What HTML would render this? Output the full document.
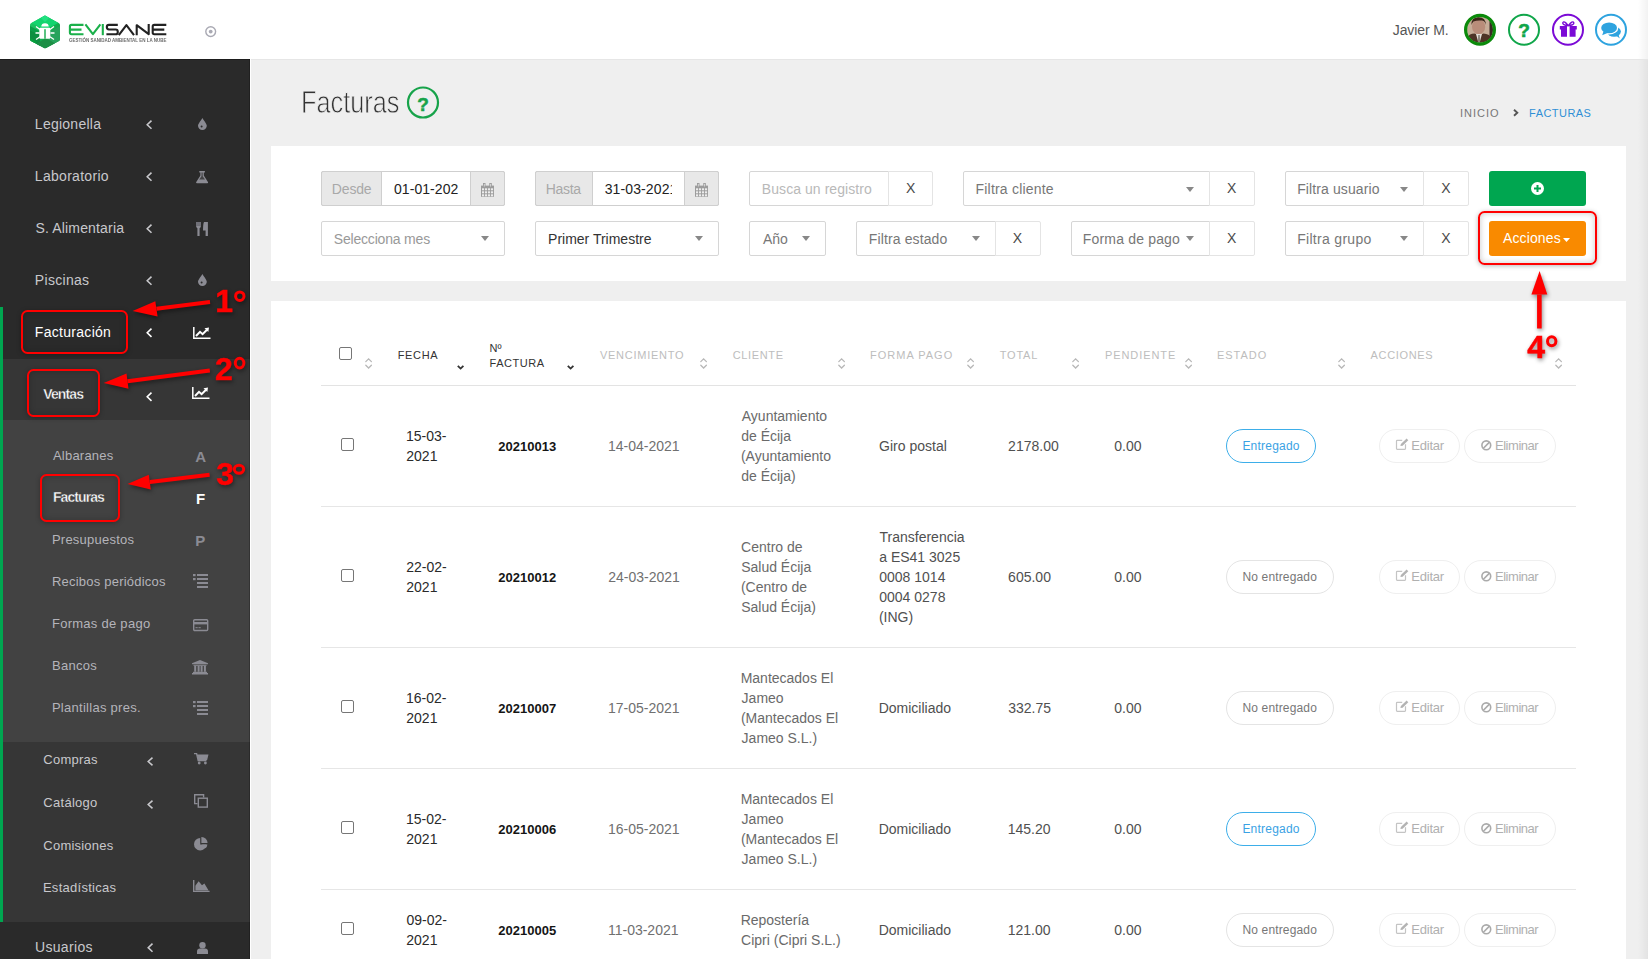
<!DOCTYPE html><html><head><meta charset="utf-8"><title>Facturas</title><style>
*{margin:0;padding:0;box-sizing:border-box}
html,body{width:1648px;height:959px;overflow:hidden;background:#efefef;font-family:"Liberation Sans",sans-serif;position:relative}
.abs{position:absolute}
.t{position:absolute;white-space:nowrap;line-height:1}
svg{position:absolute;overflow:visible}
</style></head><body>
<div class="abs" style="left:0px;top:0px;width:1648px;height:59px;background:#fff"></div>
<div class="abs" style="left:1638px;top:0px;width:10px;height:959px;background:linear-gradient(90deg,rgba(0,0,0,0),rgba(0,0,0,0.05))"></div>
<svg style="left:0;top:0" width="250" height="59" viewBox="0 0 250 59">
<defs><linearGradient id="hg" x1="0" y1="0" x2="1" y2="1"><stop offset="0" stop-color="#1fd06a"/><stop offset="0.5" stop-color="#10b150"/><stop offset="1" stop-color="#1a9a48"/></linearGradient></defs>
<path d="M45,15.5 L59,23.2 Q60,23.8 60,25 L60,39.3 Q60,40.5 59,41.1 L46,48 Q45,48.5 44,48 L31,41.1 Q30,40.5 30,39.3 L30,25 Q30,23.8 31,23.2 L44,15.9 Q45,15.3 46,15.9Z" fill="url(#hg)"/>
<clipPath id="hc"><path d="M45,15.5 L59,23.2 Q60,23.8 60,25 L60,39.3 Q60,40.5 59,41.1 L46,48 Q45,48.5 44,48 L31,41.1 Q30,40.5 30,39.3 L30,25 Q30,23.8 31,23.2 L44,15.9 Q45,15.3 46,15.9Z"/></clipPath>
<g clip-path="url(#hc)">
<path d="M30,15 H60 V22 L45,30 L30,22Z" fill="#12d46e"/>
<path d="M38,15 H52 L45,22Z" fill="#22e080"/>
<path d="M30,26 L45,34 L45,38 L30,30Z" fill="#0a9c48"/>
<path d="M30,30 L40,35 L40,48 L30,48Z" fill="#0b8f40"/>
<path d="M45,34 L60,26 V48 H45Z" fill="#27a35c"/>
<path d="M36,44 L46,38 L56,44 L45,49Z" fill="#1c8f45"/>
<path d="M30,38 L37,42 L30,46Z" fill="#07a13e"/>
</g>
<path d="M41.3,26.6 A3.7,3.4 0 0 1 48.7,26.6 Z" fill="#fff"/>
<rect x="39.3" y="27.8" width="11" height="11" rx="1" fill="#fff"/>
<rect x="44.3" y="29.2" width="1.4" height="9.6" fill="#14a84c"/>
<path d="M36,26.5 L40,29.5 M54,26.5 L50,29.5 M35.5,33 L39.5,33 M54.5,33 L50.5,33 M36,39.5 L40,36.8 M54,39.5 L50,36.8" stroke="#fff" stroke-width="1.3"/>
<g fill="none" stroke-width="2.1" stroke-linecap="butt" stroke-linejoin="round">
<path d="M83.5,24.9 H71.5 Q69.9,24.9 69.9,26.5 V32.6 Q69.9,34.3 71.5,34.3 H83.5 M70,29.6 H81.5" stroke="#1ab04a"/>
<path d="M85.4,24.4 L92.9,34.2 L100.4,24.4" stroke="#1ab04a"/>
<path d="M102.8,24 V35.2" stroke="#1ab04a"/>
<path d="M117.8,24.9 H109 Q106.8,24.9 106.8,27.1 Q106.8,29.5 109,29.5 H115.6 Q117.8,29.5 117.8,31.9 Q117.8,34.3 115.6,34.3 H106.4" stroke="#222"/>
<path d="M118.8,35.2 L126.4,25.1 L134,35.2" stroke="#222"/>
<path d="M136.7,35.2 V25.2 L148.7,34.2 V24" stroke="#222"/>
<path d="M166.3,24.9 H154.3 Q152.7,24.9 152.7,26.5 V32.6 Q152.7,34.3 154.3,34.3 H166.3 M152.8,29.6 H164.3" stroke="#222"/>
</g>
<text x="69" y="41.9" font-family="Liberation Sans" font-weight="bold" font-size="4.5" fill="#505050" opacity="0.85" textLength="97.5" lengthAdjust="spacingAndGlyphs">GESTIÓN SANIDAD AMBIENTAL EN LA NUBE</text>
<circle cx="210.7" cy="31.6" r="4.9" fill="none" stroke="#a9a9b3" stroke-width="1.4"/>
<circle cx="210.7" cy="31.6" r="1.9" fill="#a9a9b3"/>
</svg>
<div class="t" style="left:1392.80px;top:23px;font-size:14px;color:#555;letter-spacing:-0.116px;">Javier M.</div>
<svg style="left:1460px;top:10px" width="170" height="42" viewBox="1460 10 170 42">
<defs><clipPath id="av"><circle cx="1480" cy="29.8" r="13"/></clipPath></defs>
<g clip-path="url(#av)">
<rect x="1466" y="15" width="28" height="30" fill="#c7ad98"/>
<rect x="1489.5" y="15" width="5" height="30" fill="#3a2a24"/>
<ellipse cx="1478.6" cy="26.8" rx="6.6" ry="7.4" fill="#b98d7a"/>
<path d="M1471.5,25 Q1471,17 1478.5,17.2 Q1486,17.5 1485.8,25 Q1485,21 1482,20.6 Q1477,20 1473.5,21.5 Q1472,23 1471.5,25Z" fill="#3b2418"/>
<path d="M1466,45 L1466.5,38 Q1469,34 1474.5,33.6 L1479,35.5 L1483.5,33.6 Q1489,34 1492,38 L1494,45Z" fill="#4e3426"/>
<path d="M1476,34 L1479,45 L1482,34Z" fill="#e2ddd6"/>
<path d="M1478.2,35 L1477.8,45 L1480.2,45 L1479.8,35Z" fill="#8a8278"/>
</g>
<circle cx="1480" cy="29.8" r="14.4" fill="none" stroke="#0b8a0b" stroke-width="3.2"/>
<circle cx="1524" cy="29.8" r="15" fill="none" stroke="#10a64a" stroke-width="2"/>
<circle cx="1568" cy="29.8" r="15" fill="none" stroke="#7b0ad6" stroke-width="2"/>
<circle cx="1611" cy="29.8" r="15" fill="none" stroke="#2ea3df" stroke-width="2"/>
<path d="M1559.8,26 H1576.8 V29.6 H1559.8Z M1561,29.6 H1575.6 V36.8 H1561Z" fill="#7b0ad6"/>
<rect x="1567" y="25.6" width="2.6" height="11.4" fill="#fff"/>
<path d="M1568.3,25.8 Q1564,20 1562.8,22.8 Q1562.2,25 1568.3,25.8 M1568.3,25.8 Q1572.6,20 1573.8,22.8 Q1574.4,25 1568.3,25.8" fill="none" stroke="#7b0ad6" stroke-width="1.4"/>
<ellipse cx="1614" cy="31.6" rx="6.9" ry="5.2" fill="#2ea3df"/>
<path d="M1616,35.5 L1619.8,38.4 L1618.2,34.2Z" fill="#2ea3df"/>
<ellipse cx="1609.1" cy="27.9" rx="9.2" ry="6.6" fill="#fff"/>
<path d="M1602.5,31 L1601.4,35.6 L1608,32.5Z" fill="#fff" stroke="#fff" stroke-width="1.6"/>
<ellipse cx="1609.1" cy="27.9" rx="7.9" ry="5.4" fill="#2ea3df"/>
<path d="M1603.5,31.2 L1602.2,35.2 L1607.5,32.9Z" fill="#2ea3df"/>
</svg>
<div class="t" style="left:1518.16px;top:20.799999999999997px;font-size:19px;color:#10a64a;font-weight:bold;-webkit-text-stroke:0.6px #10a64a;">?</div>
<div class="abs" style="left:0px;top:59px;width:250px;height:900px;background:#2a2a2a"></div>
<div class="abs" style="left:0px;top:359px;width:250px;height:61px;background:#363636"></div>
<div class="abs" style="left:0px;top:420px;width:250px;height:322px;background:#424242"></div>
<div class="abs" style="left:0px;top:742px;width:250px;height:180px;background:#363636"></div>
<div class="abs" style="left:0px;top:922px;width:250px;height:37px;background:#2a2a2a"></div>
<div class="abs" style="left:0px;top:307px;width:3px;height:615px;background:#00a650"></div>
<div class="abs" style="left:249px;top:59px;width:1px;height:900px;background:rgba(0,0,0,0.22)"></div>
<div class="abs" style="left:250px;top:59px;width:1px;height:900px;background:#fff"></div>
<div class="abs" style="left:0px;top:59px;width:250px;height:1px;background:rgba(0,0,0,0.3)"></div>
<div class="abs" style="left:251px;top:59px;width:1397px;height:1px;background:#e6e6e6"></div>
<div class="t" style="left:34.85px;top:117px;font-size:14px;color:#c8c8cc;letter-spacing:0.253px;">Legionella</div>
<div class="t" style="left:34.85px;top:169px;font-size:14px;color:#c8c8cc;letter-spacing:0.290px;">Laboratorio</div>
<div class="t" style="left:35.38px;top:221px;font-size:14px;color:#c8c8cc;letter-spacing:0.170px;">S. Alimentaria</div>
<div class="t" style="left:34.85px;top:273px;font-size:14px;color:#c8c8cc;letter-spacing:0.302px;">Piscinas</div>
<div class="t" style="left:34.85px;top:325px;font-size:14px;color:#fff;letter-spacing:0.291px;">Facturación</div>
<div class="t" style="left:43.22px;top:387px;font-size:14px;color:#fff;font-weight:bold;letter-spacing:-0.858px;-webkit-text-stroke:0.35px #363636;">Ventas</div>
<div class="t" style="left:52.97px;top:449px;font-size:13px;color:#b4b4ba;letter-spacing:0.221px;">Albaranes</div>
<div class="t" style="left:51.93px;top:533px;font-size:13px;color:#b4b4ba;letter-spacing:0.241px;">Presupuestos</div>
<div class="t" style="left:51.93px;top:575px;font-size:13px;color:#b4b4ba;letter-spacing:0.218px;">Recibos periódicos</div>
<div class="t" style="left:51.93px;top:617px;font-size:13px;color:#b4b4ba;letter-spacing:0.271px;">Formas de pago</div>
<div class="t" style="left:51.93px;top:659px;font-size:13px;color:#b4b4ba;letter-spacing:0.313px;">Bancos</div>
<div class="t" style="left:51.93px;top:701px;font-size:13px;color:#b4b4ba;letter-spacing:0.272px;">Plantillas pres.</div>
<div class="t" style="left:52.88px;top:490px;font-size:14px;color:#fff;font-weight:bold;letter-spacing:-0.910px;-webkit-text-stroke:0.35px #424242;">Facturas</div>
<div class="t" style="left:43.35px;top:753px;font-size:13px;color:#c8c8cc;letter-spacing:0.232px;">Compras</div>
<div class="t" style="left:43.35px;top:796px;font-size:13px;color:#c8c8cc;letter-spacing:0.278px;">Catálogo</div>
<div class="t" style="left:43.35px;top:839px;font-size:13px;color:#c8c8cc;letter-spacing:0.212px;">Comisiones</div>
<div class="t" style="left:42.93px;top:881px;font-size:13px;color:#c8c8cc;letter-spacing:0.267px;">Estadísticas</div>
<div class="t" style="left:34.94px;top:940px;font-size:14px;color:#c8c8cc;letter-spacing:0.332px;">Usuarios</div>
<svg style="left:146px;top:119.89999999999999px" width="7.5" height="10.399999999999991" viewBox="0 0 7.5 10.399999999999991"><path d="M5.5,0.6 L1.2,4.699999999999996 L5.5,8.799999999999992" fill="none" stroke="#c8c8cc" stroke-width="1.55"/></svg>
<svg style="left:146px;top:171.60000000000002px" width="7.5" height="10.399999999999977" viewBox="0 0 7.5 10.399999999999977"><path d="M5.5,0.6 L1.2,4.699999999999989 L5.5,8.799999999999978" fill="none" stroke="#c8c8cc" stroke-width="1.55"/></svg>
<svg style="left:146px;top:223.9px" width="7.5" height="10.399999999999977" viewBox="0 0 7.5 10.399999999999977"><path d="M5.5,0.6 L1.2,4.699999999999989 L5.5,8.799999999999978" fill="none" stroke="#c8c8cc" stroke-width="1.55"/></svg>
<svg style="left:146px;top:275.6px" width="7.5" height="10.399999999999977" viewBox="0 0 7.5 10.399999999999977"><path d="M5.5,0.6 L1.2,4.699999999999989 L5.5,8.799999999999978" fill="none" stroke="#c8c8cc" stroke-width="1.55"/></svg>
<svg style="left:146px;top:328px" width="7.5" height="10.5" viewBox="0 0 7.5 10.5"><path d="M5.5,0.6 L1.2,4.75 L5.5,8.9" fill="none" stroke="#fff" stroke-width="1.55"/></svg>
<svg style="left:146px;top:391.5px" width="7.5" height="10.5" viewBox="0 0 7.5 10.5"><path d="M5.5,0.6 L1.2,4.75 L5.5,8.9" fill="none" stroke="#fff" stroke-width="1.55"/></svg>
<svg style="left:147px;top:757px" width="7.5" height="10" viewBox="0 0 7.5 10"><path d="M5.5,0.6 L1.2,4.5 L5.5,8.4" fill="none" stroke="#c8c8cc" stroke-width="1.55"/></svg>
<svg style="left:147px;top:800px" width="7.5" height="10" viewBox="0 0 7.5 10"><path d="M5.5,0.6 L1.2,4.5 L5.5,8.4" fill="none" stroke="#c8c8cc" stroke-width="1.55"/></svg>
<svg style="left:146.5px;top:943px" width="7.5" height="10.299999999999955" viewBox="0 0 7.5 10.299999999999955"><path d="M5.5,0.6 L1.2,4.649999999999977 L5.5,8.699999999999955" fill="none" stroke="#c8c8cc" stroke-width="1.55"/></svg>
<svg style="left:197.5px;top:118.3px" width="9" height="12" viewBox="0 0 9 12"><path d="M4.4,0 C3.5,2 0,5.6 0,7.8 A4.4,4.2 0 0 0 8.8,7.8 C8.8,5.6 5.3,2 4.4,0Z" fill="#8b8b93"/><circle cx="3.6" cy="8.4" r="1" fill="#2b2b2b"/></svg>
<svg style="left:197.5px;top:274.3px" width="9" height="12" viewBox="0 0 9 12"><path d="M4.4,0 C3.5,2 0,5.6 0,7.8 A4.4,4.2 0 0 0 8.8,7.8 C8.8,5.6 5.3,2 4.4,0Z" fill="#8b8b93"/><circle cx="3.6" cy="8.4" r="1" fill="#2b2b2b"/></svg>
<svg style="left:195.8px;top:170.8px" width="12.2" height="12.3" viewBox="0 0 12.2 12.3"><path d="M3.3,0 H8.9 V1.4 H7.8 V4.6 L12.1,11.2 Q12.3,12.3 11.2,12.3 H1 Q-0.1,12.3 0.1,11.2 L4.4,4.6 V1.4 H3.3Z" fill="#8b8b93"/><path d="M5.5,1.6 V5.2 L3.2,8.6 H9 L6.7,5.2 V1.6Z" fill="#2b2b2b" opacity="0.75"/></svg>
<svg style="left:195.8px;top:222px" width="12" height="14" viewBox="0 0 12 14"><rect x="0" y="0" width="5" height="3.6" fill="#707078"/><path d="M0,3.4 H5 Q5,5.6 3.6,6.2 V14 H1.4 V6.2 Q0,5.6 0,3.4Z" fill="#8b8b93"/><path d="M8,0 H11.9 V14 H9.6 V8.4 H7 Q7,2 8,0Z" fill="#8b8b93"/></svg>
<svg style="left:193px;top:327.2px" width="18" height="12" viewBox="0 0 18 12"><path d="M0.8,0 V11.2 H17.5" fill="none" stroke="#fff" stroke-width="1.5"/><path d="M3,9 L7,4.8 L9.6,7.2 L14,2.8" fill="none" stroke="#fff" stroke-width="2"/><path d="M11.5,1.2 L16,0.5 L15.3,5Z" fill="#fff"/></svg>
<svg style="left:192.4px;top:387.2px" width="18" height="12" viewBox="0 0 18 12"><path d="M0.8,0 V11.2 H17.5" fill="none" stroke="#fff" stroke-width="1.5"/><path d="M3,9 L7,4.8 L9.6,7.2 L14,2.8" fill="none" stroke="#fff" stroke-width="2"/><path d="M11.5,1.2 L16,0.5 L15.3,5Z" fill="#fff"/></svg>
<div class="t" style="left:195.24px;top:449px;font-size:15px;color:#8b8b93;font-weight:bold;">A</div>
<div class="t" style="left:196.01px;top:491px;font-size:15px;color:#fff;font-weight:bold;">F</div>
<div class="t" style="left:195.31px;top:533px;font-size:15px;color:#8b8b93;font-weight:bold;">P</div>
<svg style="left:193.2px;top:574.2px" width="15" height="14" viewBox="0 0 15 14"><rect x="4" y="0" width="11" height="2" fill="#8b8b93"/><rect x="4" y="4" width="11" height="2" fill="#8b8b93"/><rect x="4" y="8" width="11" height="2" fill="#8b8b93"/><rect x="4" y="12" width="11" height="2" fill="#8b8b93"/><rect x="0" y="0" width="2.6" height="2.2" fill="#8b8b93"/><rect x="0" y="4" width="2.6" height="2.2" fill="#8b8b93"/></svg>
<svg style="left:193px;top:700.8px" width="15" height="14" viewBox="0 0 15 14"><rect x="4" y="0" width="11" height="2" fill="#8b8b93"/><rect x="4" y="4" width="11" height="2" fill="#8b8b93"/><rect x="4" y="8" width="11" height="2" fill="#8b8b93"/><rect x="4" y="12" width="11" height="2" fill="#8b8b93"/><rect x="0" y="0" width="2.6" height="2.2" fill="#8b8b93"/><rect x="0" y="4" width="2.6" height="2.2" fill="#8b8b93"/></svg>
<svg style="left:192.8px;top:618.9px" width="15.4" height="12.2" viewBox="0 0 15.4 12.2"><rect x="0.7" y="0.7" width="14" height="10.8" rx="1" fill="none" stroke="#8b8b93" stroke-width="1.4"/><rect x="0.7" y="3" width="14" height="2.4" fill="#8b8b93"/><rect x="2.5" y="8.2" width="2.2" height="1" fill="#8b8b93"/><rect x="5.5" y="8.2" width="2.2" height="1" fill="#8b8b93"/></svg>
<svg style="left:191.9px;top:659.5px" width="16" height="14.5" viewBox="0 0 16 14.5"><path d="M8,0 L16,3.2 V4.3 H0 V3.2Z" fill="#8b8b93"/><rect x="1.5" y="4.8" width="13" height="1" fill="#8b8b93"/><rect x="2.2" y="5.8" width="2" height="6" fill="#8b8b93"/><rect x="5.6" y="5.8" width="2" height="6" fill="#8b8b93"/><rect x="8.6" y="5.8" width="2" height="6" fill="#8b8b93"/><rect x="11.9" y="5.8" width="2" height="6" fill="#8b8b93"/><rect x="1" y="11.8" width="14" height="1.2" fill="#8b8b93"/><rect x="0" y="13" width="16" height="1.5" fill="#8b8b93"/></svg>
<svg style="left:194.4px;top:753px" width="13.6" height="11.5" viewBox="0 0 13.6 11.5"><path d="M0,0.6 H2.6 L4.2,7.6 H12.5 M3.2,2.3 H13.6 L12.6,6.3 H4" fill="none" stroke="#8b8b93" stroke-width="1.4"/><path d="M3.4,2.3 H13.6 L12.6,6.3 H4.2Z" fill="#8b8b93"/><circle cx="5.2" cy="10" r="1.4" fill="#8b8b93"/><circle cx="11.4" cy="10" r="1.4" fill="#8b8b93"/></svg>
<svg style="left:194px;top:794.3px" width="14" height="13.8" viewBox="0 0 14 13.8"><path d="M3.5,9.6 H0.7 V0.7 H9.6 V3.5" fill="none" stroke="#8b8b93" stroke-width="1.4"/><rect x="4.3" y="4.2" width="9" height="8.9" fill="none" stroke="#8b8b93" stroke-width="1.4"/></svg>
<svg style="left:194px;top:837px" width="13.8" height="13.2" viewBox="0 0 13.8 13.2"><path d="M6.2,1 A6.2,6.2 0 1 0 12.4,7.4 H6.2Z" fill="#8b8b93"/><path d="M7.4,0 A6,6 0 0 1 13.6,6 H7.4Z" fill="#8b8b93"/><path d="M8,7.4 H13.4 A6,6 0 0 1 11.5,11.3Z" fill="#8b8b93"/></svg>
<svg style="left:192.6px;top:879.7px" width="16.6" height="12.2" viewBox="0 0 16.6 12.2"><path d="M0.7,0 V11.4 H16.6" fill="none" stroke="#8b8b93" stroke-width="1.4"/><path d="M2.4,10.4 V5.8 L5.6,1.2 L9,5.2 L11.4,3.4 L15.6,10.4Z" fill="#8b8b93"/></svg>
<svg style="left:196.7px;top:942px" width="11" height="12" viewBox="0 0 11 12"><circle cx="5.5" cy="3.2" r="3.2" fill="#8b8b93"/><path d="M0,12 V9.6 Q0,6.4 3,6.4 H8 Q11,6.4 11,9.6 V12Z" fill="#8b8b93"/></svg>
<div class="t" style="left:300.72px;top:87px;font-size:31px;color:#333;transform:scaleX(0.8167);transform-origin:0 0;-webkit-text-stroke:0.8px #efefef;">Facturas</div>
<svg style="left:405px;top:85px" width="36" height="36" viewBox="0 0 36 36"><circle cx="18" cy="17.5" r="15" fill="none" stroke="#17a34a" stroke-width="2.2"/></svg>
<div class="t" style="left:417.16px;top:95px;font-size:19px;color:#17a34a;font-weight:bold;-webkit-text-stroke:0.5px #17a34a;">?</div>
<div class="t" style="left:1459.99px;top:108px;font-size:11px;color:#777;letter-spacing:0.985px;">INICIO</div>
<svg style="left:1512.8px;top:108.5px" width="6" height="8" viewBox="0 0 6 8"><path d="M1,0.8 L4.3,3.8 L1,6.8" fill="none" stroke="#555" stroke-width="1.9"/></svg>
<div class="t" style="left:1529.10px;top:108px;font-size:11px;color:#2f8fd6;letter-spacing:0.448px;">FACTURAS</div>
<div class="abs" style="left:271px;top:146px;width:1355px;height:135px;background:#fff"></div>
<div class="abs" style="left:271px;top:301px;width:1355px;height:658px;background:#fff"></div>
<div class="abs" style="left:321px;top:171px;width:184px;height:35px;background:#fff;border:1px solid #cfcfcf;border-radius:2px"></div>
<div class="abs" style="left:321px;top:171px;width:61px;height:35px;background:#e8e8e8;border:1px solid #cfcfcf;border-radius:2px 0 0 2px"></div>
<div class="abs" style="left:470px;top:171px;width:35px;height:35px;background:#e8e8e8;border:1px solid #cfcfcf;border-radius:0 2px 2px 0"></div>
<div class="t" style="left:331.85px;top:182px;font-size:14px;color:#a9a9a9;letter-spacing:-0.174px;">Desde</div>
<div class="t" style="left:393.97px;top:182px;font-size:14px;color:#222;letter-spacing:0.065px;">01-01-202</div>
<svg style="left:481px;top:183px" width="13" height="14" viewBox="0 0 13 14"><rect x="0" y="2.6" width="13" height="11.2" fill="#9c9c9c"/><rect x="2" y="0" width="2.5" height="4" fill="#9c9c9c"/><rect x="8.3" y="0" width="2.5" height="4" fill="#9c9c9c"/><rect x="2.9" y="0.9" width="0.8" height="2.6" fill="#e0e0e0"/><rect x="9.2" y="0.9" width="0.8" height="2.6" fill="#e0e0e0"/><rect x="1" y="5.3" width="2.1" height="2" fill="#ededed"/><rect x="1" y="8.3" width="2.1" height="2" fill="#ededed"/><rect x="1" y="11.3" width="2.1" height="2" fill="#ededed"/><rect x="4" y="5.3" width="2.1" height="2" fill="#ededed"/><rect x="4" y="8.3" width="2.1" height="2" fill="#ededed"/><rect x="4" y="11.3" width="2.1" height="2" fill="#ededed"/><rect x="7" y="5.3" width="2.1" height="2" fill="#ededed"/><rect x="7" y="8.3" width="2.1" height="2" fill="#ededed"/><rect x="7" y="11.3" width="2.1" height="2" fill="#ededed"/><rect x="10" y="5.3" width="2.1" height="2" fill="#ededed"/><rect x="10" y="8.3" width="2.1" height="2" fill="#ededed"/><rect x="10" y="11.3" width="2.1" height="2" fill="#ededed"/></svg>
<div class="abs" style="left:535px;top:171px;width:184px;height:35px;background:#fff;border:1px solid #cfcfcf;border-radius:2px"></div>
<div class="abs" style="left:535px;top:171px;width:58px;height:35px;background:#e8e8e8;border:1px solid #cfcfcf;border-radius:2px 0 0 2px"></div>
<div class="abs" style="left:684px;top:171px;width:35px;height:35px;background:#e8e8e8;border:1px solid #cfcfcf;border-radius:0 2px 2px 0"></div>
<div class="t" style="left:545.85px;top:182px;font-size:14px;color:#a9a9a9;letter-spacing:-0.362px;">Hasta</div>
<div class="abs" style="left:600px;top:175px;width:72px;height:26px;overflow:hidden"><div class="t" style="left:4.67px;top:7px;font-size:14px;color:#222;letter-spacing:0.120px;">31-03-2021</div></div>
<svg style="left:695px;top:183px" width="13" height="14" viewBox="0 0 13 14"><rect x="0" y="2.6" width="13" height="11.2" fill="#9c9c9c"/><rect x="2" y="0" width="2.5" height="4" fill="#9c9c9c"/><rect x="8.3" y="0" width="2.5" height="4" fill="#9c9c9c"/><rect x="2.9" y="0.9" width="0.8" height="2.6" fill="#e0e0e0"/><rect x="9.2" y="0.9" width="0.8" height="2.6" fill="#e0e0e0"/><rect x="1" y="5.3" width="2.1" height="2" fill="#ededed"/><rect x="1" y="8.3" width="2.1" height="2" fill="#ededed"/><rect x="1" y="11.3" width="2.1" height="2" fill="#ededed"/><rect x="4" y="5.3" width="2.1" height="2" fill="#ededed"/><rect x="4" y="8.3" width="2.1" height="2" fill="#ededed"/><rect x="4" y="11.3" width="2.1" height="2" fill="#ededed"/><rect x="7" y="5.3" width="2.1" height="2" fill="#ededed"/><rect x="7" y="8.3" width="2.1" height="2" fill="#ededed"/><rect x="7" y="11.3" width="2.1" height="2" fill="#ededed"/><rect x="10" y="5.3" width="2.1" height="2" fill="#ededed"/><rect x="10" y="8.3" width="2.1" height="2" fill="#ededed"/><rect x="10" y="11.3" width="2.1" height="2" fill="#ededed"/></svg>
<div class="abs" style="left:749px;top:171px;width:140px;height:35px;background:#fff;border:1px solid #d6d6d6;border-radius:2px 0 0 2px"></div>
<div class="abs" style="left:888px;top:171px;width:45px;height:35px;background:#fff;border:1px solid #e4e4e4;border-radius:0 2px 2px 0"></div>
<div class="t" style="left:761.85px;top:182px;font-size:14px;color:#b9b9b9;letter-spacing:0.060px;">Busca un registro</div>
<div class="t" style="left:906.09px;top:181px;font-size:14px;color:#4a4a4a;">X</div>
<div class="abs" style="left:963px;top:171px;width:247px;height:35px;background:#fff;border:1px solid #d6d6d6;border-radius:2px 0 0 2px"></div>
<div class="abs" style="left:1209px;top:171px;width:46px;height:35px;background:#fff;border:1px solid #e4e4e4;border-radius:0 2px 2px 0"></div>
<div class="t" style="left:975.55px;top:182px;font-size:14px;color:#777;letter-spacing:0.200px;">Filtra cliente</div>
<svg style="left:1186px;top:186.5px" width="8" height="5" viewBox="0 0 8 5"><path d="M0,0 H8 L4,5Z" fill="#888"/></svg>
<div class="t" style="left:1227.09px;top:181px;font-size:14px;color:#4a4a4a;">X</div>
<div class="abs" style="left:1285px;top:171px;width:139px;height:35px;background:#fff;border:1px solid #d6d6d6;border-radius:2px 0 0 2px"></div>
<div class="abs" style="left:1423px;top:171px;width:46px;height:35px;background:#fff;border:1px solid #e4e4e4;border-radius:0 2px 2px 0"></div>
<div class="t" style="left:1297.15px;top:182px;font-size:14px;color:#777;letter-spacing:0.114px;">Filtra usuario</div>
<svg style="left:1400px;top:186.5px" width="8" height="5" viewBox="0 0 8 5"><path d="M0,0 H8 L4,5Z" fill="#888"/></svg>
<div class="t" style="left:1441.29px;top:181px;font-size:14px;color:#4a4a4a;">X</div>
<div class="abs" style="left:1489px;top:171px;width:97px;height:35px;background:#00a650;border-radius:3px"></div>
<svg style="left:1530.5px;top:181.8px" width="13" height="13" viewBox="0 0 13 13"><circle cx="6.5" cy="6.5" r="6.5" fill="#fff"/><rect x="3" y="5.5" width="7" height="2" fill="#00a650"/><rect x="5.5" y="3" width="2" height="7" fill="#00a650"/></svg>
<div class="abs" style="left:321px;top:221px;width:184px;height:35px;background:#fff;border:1px solid #d6d6d6;border-radius:2px"></div>
<div class="t" style="left:333.78px;top:232px;font-size:14px;color:#999;letter-spacing:-0.186px;">Selecciona mes</div>
<svg style="left:481.3px;top:236.4px" width="8" height="5" viewBox="0 0 8 5"><path d="M0,0 H8 L4,5Z" fill="#888"/></svg>
<div class="abs" style="left:535px;top:221px;width:184px;height:35px;background:#fff;border:1px solid #d6d6d6;border-radius:2px"></div>
<div class="t" style="left:548.05px;top:232px;font-size:14px;color:#333;">Primer Trimestre</div>
<svg style="left:695px;top:236.4px" width="8" height="5" viewBox="0 0 8 5"><path d="M0,0 H8 L4,5Z" fill="#888"/></svg>
<div class="abs" style="left:749px;top:221px;width:77px;height:35px;background:#fff;border:1px solid #d6d6d6;border-radius:2px"></div>
<div class="t" style="left:762.97px;top:232px;font-size:14px;color:#777;letter-spacing:-0.066px;">Año</div>
<svg style="left:802px;top:236.4px" width="8" height="5" viewBox="0 0 8 5"><path d="M0,0 H8 L4,5Z" fill="#888"/></svg>
<div class="abs" style="left:856px;top:221px;width:140px;height:35px;background:#fff;border:1px solid #d6d6d6;border-radius:2px 0 0 2px"></div>
<div class="abs" style="left:995px;top:221px;width:46px;height:35px;background:#fff;border:1px solid #e4e4e4;border-radius:0 2px 2px 0"></div>
<div class="t" style="left:868.85px;top:232px;font-size:14px;color:#777;letter-spacing:0.115px;">Filtra estado</div>
<svg style="left:972px;top:236.4px" width="8" height="5" viewBox="0 0 8 5"><path d="M0,0 H8 L4,5Z" fill="#888"/></svg>
<div class="t" style="left:1012.69px;top:231px;font-size:14px;color:#4a4a4a;">X</div>
<div class="abs" style="left:1071px;top:221px;width:139px;height:35px;background:#fff;border:1px solid #d6d6d6;border-radius:2px 0 0 2px"></div>
<div class="abs" style="left:1209px;top:221px;width:46px;height:35px;background:#fff;border:1px solid #e4e4e4;border-radius:0 2px 2px 0"></div>
<div class="t" style="left:1082.85px;top:232px;font-size:14px;color:#777;letter-spacing:0.172px;">Forma de pago</div>
<svg style="left:1186px;top:236.4px" width="8" height="5" viewBox="0 0 8 5"><path d="M0,0 H8 L4,5Z" fill="#888"/></svg>
<div class="t" style="left:1227.09px;top:231px;font-size:14px;color:#4a4a4a;">X</div>
<div class="abs" style="left:1285px;top:221px;width:139px;height:35px;background:#fff;border:1px solid #d6d6d6;border-radius:2px 0 0 2px"></div>
<div class="abs" style="left:1423px;top:221px;width:46px;height:35px;background:#fff;border:1px solid #e4e4e4;border-radius:0 2px 2px 0"></div>
<div class="t" style="left:1297.15px;top:232px;font-size:14px;color:#777;letter-spacing:0.309px;">Filtra grupo</div>
<svg style="left:1400px;top:236.4px" width="8" height="5" viewBox="0 0 8 5"><path d="M0,0 H8 L4,5Z" fill="#888"/></svg>
<div class="t" style="left:1441.29px;top:231px;font-size:14px;color:#4a4a4a;">X</div>
<div class="abs" style="left:1489px;top:221px;width:97px;height:35px;background:#f98a00;border-radius:3px"></div>
<div class="t" style="left:1502.97px;top:231px;font-size:14px;color:#fff;letter-spacing:0.131px;">Acciones</div>
<svg style="left:1562.5px;top:237.5px" width="7" height="4" viewBox="0 0 7 4"><path d="M0,0 H7 L3.5,4Z" fill="#fff"/></svg>
<div class="abs" style="left:339px;top:347px;width:13px;height:13px;border:1px solid #767676;border-radius:2px;background:#fff"></div>
<svg style="left:364.79999999999995px;top:358px" width="8" height="11" viewBox="0 0 8 11"><path d="M0.8,3.6 L3.6,0.8 L6.4,3.6 M0.8,7.2 L3.6,10 L6.4,7.2" fill="none" stroke="#b8b8b8" stroke-width="1.3" stroke-linecap="round"/></svg>
<div class="t" style="left:397.70px;top:350px;font-size:11px;color:#333;letter-spacing:0.684px;">FECHA</div>
<svg style="left:456.7px;top:365px" width="8" height="5" viewBox="0 0 8 5"><path d="M0.8,0.8 L3.6,3.6 L6.4,0.8" fill="none" stroke="#333" stroke-width="1.8"/></svg>
<div class="t" style="left:489.60px;top:343px;font-size:11px;color:#333;">Nº</div>
<div class="t" style="left:489.60px;top:358px;font-size:11px;color:#333;letter-spacing:0.513px;">FACTURA</div>
<svg style="left:566.9px;top:365px" width="8" height="5" viewBox="0 0 8 5"><path d="M0.8,0.8 L3.6,3.6 L6.4,0.8" fill="none" stroke="#333" stroke-width="1.8"/></svg>
<div class="t" style="left:599.96px;top:350px;font-size:11px;color:#bdbdbd;letter-spacing:0.739px;">VENCIMIENTO</div>
<svg style="left:699.6999999999999px;top:358px" width="8" height="11" viewBox="0 0 8 11"><path d="M0.8,3.6 L3.6,0.8 L6.4,3.6 M0.8,7.2 L3.6,10 L6.4,7.2" fill="none" stroke="#b8b8b8" stroke-width="1.3" stroke-linecap="round"/></svg>
<div class="t" style="left:732.65px;top:350px;font-size:11px;color:#bdbdbd;letter-spacing:0.658px;">CLIENTE</div>
<svg style="left:837.6999999999999px;top:358px" width="8" height="11" viewBox="0 0 8 11"><path d="M0.8,3.6 L3.6,0.8 L6.4,3.6 M0.8,7.2 L3.6,10 L6.4,7.2" fill="none" stroke="#b8b8b8" stroke-width="1.3" stroke-linecap="round"/></svg>
<div class="t" style="left:870.10px;top:350px;font-size:11px;color:#bdbdbd;letter-spacing:0.998px;">FORMA PAGO</div>
<svg style="left:966.6999999999999px;top:358px" width="8" height="11" viewBox="0 0 8 11"><path d="M0.8,3.6 L3.6,0.8 L6.4,3.6 M0.8,7.2 L3.6,10 L6.4,7.2" fill="none" stroke="#b8b8b8" stroke-width="1.3" stroke-linecap="round"/></svg>
<div class="t" style="left:999.76px;top:350px;font-size:11px;color:#bdbdbd;letter-spacing:0.791px;">TOTAL</div>
<svg style="left:1072.4px;top:358px" width="8" height="11" viewBox="0 0 8 11"><path d="M0.8,3.6 L3.6,0.8 L6.4,3.6 M0.8,7.2 L3.6,10 L6.4,7.2" fill="none" stroke="#b8b8b8" stroke-width="1.3" stroke-linecap="round"/></svg>
<div class="t" style="left:1104.90px;top:350px;font-size:11px;color:#bdbdbd;letter-spacing:0.938px;">PENDIENTE</div>
<svg style="left:1184.6000000000001px;top:358px" width="8" height="11" viewBox="0 0 8 11"><path d="M0.8,3.6 L3.6,0.8 L6.4,3.6 M0.8,7.2 L3.6,10 L6.4,7.2" fill="none" stroke="#b8b8b8" stroke-width="1.3" stroke-linecap="round"/></svg>
<div class="t" style="left:1216.90px;top:350px;font-size:11px;color:#bdbdbd;letter-spacing:0.982px;">ESTADO</div>
<svg style="left:1337.8000000000002px;top:358px" width="8" height="11" viewBox="0 0 8 11"><path d="M0.8,3.6 L3.6,0.8 L6.4,3.6 M0.8,7.2 L3.6,10 L6.4,7.2" fill="none" stroke="#b8b8b8" stroke-width="1.3" stroke-linecap="round"/></svg>
<div class="t" style="left:1370.58px;top:350px;font-size:11px;color:#bdbdbd;letter-spacing:0.666px;">ACCIONES</div>
<svg style="left:1554.6000000000001px;top:358px" width="8" height="11" viewBox="0 0 8 11"><path d="M0.8,3.6 L3.6,0.8 L6.4,3.6 M0.8,7.2 L3.6,10 L6.4,7.2" fill="none" stroke="#b8b8b8" stroke-width="1.3" stroke-linecap="round"/></svg>
<div class="abs" style="left:321px;top:385px;width:1255px;height:1px;background:#e3e3e3"></div>
<div class="abs" style="left:341px;top:438px;width:13px;height:13px;border:1px solid #767676;border-radius:2px;background:#fff"></div>
<div class="t" style="left:405.94px;top:429px;font-size:14px;color:#2a2a2a;">15-03-</div>
<div class="t" style="left:406.30px;top:449px;font-size:14px;color:#2a2a2a;">2021</div>
<div class="t" style="left:498.36px;top:440px;font-size:13px;color:#151515;font-weight:bold;">20210013</div>
<div class="t" style="left:607.94px;top:439px;font-size:14px;color:#707070;">14-04-2021</div>
<div class="t" style="left:741.77px;top:409px;font-size:14px;color:#6a6a6a;">Ayuntamiento</div>
<div class="t" style="left:741.21px;top:429px;font-size:14px;color:#6a6a6a;">de Écija</div>
<div class="t" style="left:740.93px;top:449px;font-size:14px;color:#6a6a6a;">(Ayuntamiento</div>
<div class="t" style="left:741.21px;top:469px;font-size:14px;color:#6a6a6a;">de Écija)</div>
<div class="t" style="left:879.10px;top:439px;font-size:14px;color:#505050;">Giro postal</div>
<div class="t" style="left:1008.10px;top:439px;font-size:14px;color:#505050;">2178.00</div>
<div class="t" style="left:1114.27px;top:439px;font-size:14px;color:#505050;">0.00</div>
<div class="abs" style="left:1226px;top:429px;width:90px;height:34px;border:1px solid #3daee9;border-radius:17px;background:#fff"></div>
<div class="t" style="left:1242.42px;top:440px;font-size:12px;color:#3aa2e4;letter-spacing:0.212px;">Entregado</div>
<div class="abs" style="left:1379px;top:429px;width:81px;height:34px;border:1px solid #efefef;border-radius:17px;background:#fff"></div>
<svg style="left:1396px;top:438px" width="13" height="12" viewBox="0 0 13 12"><path d="M9.5,6.2 V10.6 Q9.5,11.3 8.8,11.3 H1.2 Q0.5,11.3 0.5,10.6 V3 Q0.5,2.3 1.2,2.3 H6.2" fill="none" stroke="#c4c4c4" stroke-width="1.2"/><path d="M4.4,8 L4.9,6.1 L10.6,0.5 L12.3,2.2 L6.6,7.8Z" fill="#b3b3b3"/></svg>
<div class="t" style="left:1411.33px;top:439px;font-size:13px;color:#b0b0b0;letter-spacing:-0.242px;">Editar</div>
<div class="abs" style="left:1464px;top:429px;width:92px;height:34px;border:1px solid #efefef;border-radius:17px;background:#fff"></div>
<svg style="left:1481px;top:440px" width="11" height="11" viewBox="0 0 11 11"><circle cx="5.3" cy="5.3" r="4.4" fill="none" stroke="#aaa" stroke-width="1.6"/><path d="M2.4,8.2 L8.2,2.4" stroke="#aaa" stroke-width="1.6"/></svg>
<div class="t" style="left:1494.93px;top:439px;font-size:13px;color:#b0b0b0;letter-spacing:-0.455px;">Eliminar</div>
<div class="abs" style="left:321px;top:506px;width:1255px;height:1px;background:#e6e6e6"></div>
<div class="abs" style="left:341px;top:569px;width:13px;height:13px;border:1px solid #767676;border-radius:2px;background:#fff"></div>
<div class="t" style="left:406.30px;top:560px;font-size:14px;color:#2a2a2a;">22-02-</div>
<div class="t" style="left:406.30px;top:580px;font-size:14px;color:#2a2a2a;">2021</div>
<div class="t" style="left:498.36px;top:571px;font-size:13px;color:#151515;font-weight:bold;">20210012</div>
<div class="t" style="left:608.30px;top:570px;font-size:14px;color:#707070;">24-03-2021</div>
<div class="t" style="left:741.10px;top:540px;font-size:14px;color:#6a6a6a;">Centro de</div>
<div class="t" style="left:741.18px;top:560px;font-size:14px;color:#6a6a6a;">Salud Écija</div>
<div class="t" style="left:740.93px;top:580px;font-size:14px;color:#6a6a6a;">(Centro de</div>
<div class="t" style="left:741.18px;top:600px;font-size:14px;color:#6a6a6a;">Salud Écija)</div>
<div class="t" style="left:879.49px;top:530px;font-size:14px;color:#505050;">Transferencia</div>
<div class="t" style="left:879.21px;top:550px;font-size:14px;color:#505050;">a ES41 3025</div>
<div class="t" style="left:879.27px;top:570px;font-size:14px;color:#505050;">0008 1014</div>
<div class="t" style="left:879.27px;top:590px;font-size:14px;color:#505050;">0004 0278</div>
<div class="t" style="left:878.93px;top:610px;font-size:14px;color:#505050;">(ING)</div>
<div class="t" style="left:1008.10px;top:570px;font-size:14px;color:#505050;">605.00</div>
<div class="t" style="left:1114.27px;top:570px;font-size:14px;color:#505050;">0.00</div>
<div class="abs" style="left:1226px;top:560px;width:108px;height:34px;border:1px solid #e4e4e4;border-radius:17px;background:#fff"></div>
<div class="t" style="left:1242.42px;top:571px;font-size:12px;color:#777;letter-spacing:0.159px;">No entregado</div>
<div class="abs" style="left:1379px;top:560px;width:81px;height:34px;border:1px solid #efefef;border-radius:17px;background:#fff"></div>
<svg style="left:1396px;top:569px" width="13" height="12" viewBox="0 0 13 12"><path d="M9.5,6.2 V10.6 Q9.5,11.3 8.8,11.3 H1.2 Q0.5,11.3 0.5,10.6 V3 Q0.5,2.3 1.2,2.3 H6.2" fill="none" stroke="#c4c4c4" stroke-width="1.2"/><path d="M4.4,8 L4.9,6.1 L10.6,0.5 L12.3,2.2 L6.6,7.8Z" fill="#b3b3b3"/></svg>
<div class="t" style="left:1411.33px;top:570px;font-size:13px;color:#b0b0b0;letter-spacing:-0.242px;">Editar</div>
<div class="abs" style="left:1464px;top:560px;width:92px;height:34px;border:1px solid #efefef;border-radius:17px;background:#fff"></div>
<svg style="left:1481px;top:571px" width="11" height="11" viewBox="0 0 11 11"><circle cx="5.3" cy="5.3" r="4.4" fill="none" stroke="#aaa" stroke-width="1.6"/><path d="M2.4,8.2 L8.2,2.4" stroke="#aaa" stroke-width="1.6"/></svg>
<div class="t" style="left:1494.93px;top:570px;font-size:13px;color:#b0b0b0;letter-spacing:-0.455px;">Eliminar</div>
<div class="abs" style="left:321px;top:647px;width:1255px;height:1px;background:#e6e6e6"></div>
<div class="abs" style="left:341px;top:700px;width:13px;height:13px;border:1px solid #767676;border-radius:2px;background:#fff"></div>
<div class="t" style="left:405.94px;top:691px;font-size:14px;color:#2a2a2a;">16-02-</div>
<div class="t" style="left:406.30px;top:711px;font-size:14px;color:#2a2a2a;">2021</div>
<div class="t" style="left:498.36px;top:702px;font-size:13px;color:#151515;font-weight:bold;">20210007</div>
<div class="t" style="left:607.94px;top:701px;font-size:14px;color:#707070;">17-05-2021</div>
<div class="t" style="left:740.65px;top:671px;font-size:14px;color:#6a6a6a;">Mantecados El</div>
<div class="t" style="left:741.60px;top:691px;font-size:14px;color:#6a6a6a;">Jameo</div>
<div class="t" style="left:740.93px;top:711px;font-size:14px;color:#6a6a6a;">(Mantecados El</div>
<div class="t" style="left:741.60px;top:731px;font-size:14px;color:#6a6a6a;">Jameo S.L.)</div>
<div class="t" style="left:878.65px;top:701px;font-size:14px;color:#505050;">Domiciliado</div>
<div class="t" style="left:1008.27px;top:701px;font-size:14px;color:#505050;">332.75</div>
<div class="t" style="left:1114.27px;top:701px;font-size:14px;color:#505050;">0.00</div>
<div class="abs" style="left:1226px;top:691px;width:108px;height:34px;border:1px solid #e4e4e4;border-radius:17px;background:#fff"></div>
<div class="t" style="left:1242.42px;top:702px;font-size:12px;color:#777;letter-spacing:0.159px;">No entregado</div>
<div class="abs" style="left:1379px;top:691px;width:81px;height:34px;border:1px solid #efefef;border-radius:17px;background:#fff"></div>
<svg style="left:1396px;top:700px" width="13" height="12" viewBox="0 0 13 12"><path d="M9.5,6.2 V10.6 Q9.5,11.3 8.8,11.3 H1.2 Q0.5,11.3 0.5,10.6 V3 Q0.5,2.3 1.2,2.3 H6.2" fill="none" stroke="#c4c4c4" stroke-width="1.2"/><path d="M4.4,8 L4.9,6.1 L10.6,0.5 L12.3,2.2 L6.6,7.8Z" fill="#b3b3b3"/></svg>
<div class="t" style="left:1411.33px;top:701px;font-size:13px;color:#b0b0b0;letter-spacing:-0.242px;">Editar</div>
<div class="abs" style="left:1464px;top:691px;width:92px;height:34px;border:1px solid #efefef;border-radius:17px;background:#fff"></div>
<svg style="left:1481px;top:702px" width="11" height="11" viewBox="0 0 11 11"><circle cx="5.3" cy="5.3" r="4.4" fill="none" stroke="#aaa" stroke-width="1.6"/><path d="M2.4,8.2 L8.2,2.4" stroke="#aaa" stroke-width="1.6"/></svg>
<div class="t" style="left:1494.93px;top:701px;font-size:13px;color:#b0b0b0;letter-spacing:-0.455px;">Eliminar</div>
<div class="abs" style="left:321px;top:768px;width:1255px;height:1px;background:#e6e6e6"></div>
<div class="abs" style="left:341px;top:821px;width:13px;height:13px;border:1px solid #767676;border-radius:2px;background:#fff"></div>
<div class="t" style="left:405.94px;top:812px;font-size:14px;color:#2a2a2a;">15-02-</div>
<div class="t" style="left:406.30px;top:832px;font-size:14px;color:#2a2a2a;">2021</div>
<div class="t" style="left:498.36px;top:823px;font-size:13px;color:#151515;font-weight:bold;">20210006</div>
<div class="t" style="left:607.94px;top:822px;font-size:14px;color:#707070;">16-05-2021</div>
<div class="t" style="left:740.65px;top:792px;font-size:14px;color:#6a6a6a;">Mantecados El</div>
<div class="t" style="left:741.60px;top:812px;font-size:14px;color:#6a6a6a;">Jameo</div>
<div class="t" style="left:740.93px;top:832px;font-size:14px;color:#6a6a6a;">(Mantecados El</div>
<div class="t" style="left:741.60px;top:852px;font-size:14px;color:#6a6a6a;">Jameo S.L.)</div>
<div class="t" style="left:878.65px;top:822px;font-size:14px;color:#505050;">Domiciliado</div>
<div class="t" style="left:1007.74px;top:822px;font-size:14px;color:#505050;">145.20</div>
<div class="t" style="left:1114.27px;top:822px;font-size:14px;color:#505050;">0.00</div>
<div class="abs" style="left:1226px;top:812px;width:90px;height:34px;border:1px solid #3daee9;border-radius:17px;background:#fff"></div>
<div class="t" style="left:1242.42px;top:823px;font-size:12px;color:#3aa2e4;letter-spacing:0.212px;">Entregado</div>
<div class="abs" style="left:1379px;top:812px;width:81px;height:34px;border:1px solid #efefef;border-radius:17px;background:#fff"></div>
<svg style="left:1396px;top:821px" width="13" height="12" viewBox="0 0 13 12"><path d="M9.5,6.2 V10.6 Q9.5,11.3 8.8,11.3 H1.2 Q0.5,11.3 0.5,10.6 V3 Q0.5,2.3 1.2,2.3 H6.2" fill="none" stroke="#c4c4c4" stroke-width="1.2"/><path d="M4.4,8 L4.9,6.1 L10.6,0.5 L12.3,2.2 L6.6,7.8Z" fill="#b3b3b3"/></svg>
<div class="t" style="left:1411.33px;top:822px;font-size:13px;color:#b0b0b0;letter-spacing:-0.242px;">Editar</div>
<div class="abs" style="left:1464px;top:812px;width:92px;height:34px;border:1px solid #efefef;border-radius:17px;background:#fff"></div>
<svg style="left:1481px;top:823px" width="11" height="11" viewBox="0 0 11 11"><circle cx="5.3" cy="5.3" r="4.4" fill="none" stroke="#aaa" stroke-width="1.6"/><path d="M2.4,8.2 L8.2,2.4" stroke="#aaa" stroke-width="1.6"/></svg>
<div class="t" style="left:1494.93px;top:822px;font-size:13px;color:#b0b0b0;letter-spacing:-0.455px;">Eliminar</div>
<div class="abs" style="left:321px;top:889px;width:1255px;height:1px;background:#e6e6e6"></div>
<div class="abs" style="left:341px;top:922px;width:13px;height:13px;border:1px solid #767676;border-radius:2px;background:#fff"></div>
<div class="t" style="left:406.47px;top:913px;font-size:14px;color:#2a2a2a;">09-02-</div>
<div class="t" style="left:406.30px;top:933px;font-size:14px;color:#2a2a2a;">2021</div>
<div class="t" style="left:498.36px;top:924px;font-size:13px;color:#151515;font-weight:bold;">20210005</div>
<div class="t" style="left:607.94px;top:923px;font-size:14px;color:#707070;">11-03-2021</div>
<div class="t" style="left:740.65px;top:913px;font-size:14px;color:#6a6a6a;">Repostería</div>
<div class="t" style="left:741.10px;top:933px;font-size:14px;color:#6a6a6a;">Cipri (Cipri S.L.)</div>
<div class="t" style="left:878.65px;top:923px;font-size:14px;color:#505050;">Domiciliado</div>
<div class="t" style="left:1007.74px;top:923px;font-size:14px;color:#505050;">121.00</div>
<div class="t" style="left:1114.27px;top:923px;font-size:14px;color:#505050;">0.00</div>
<div class="abs" style="left:1226px;top:913px;width:108px;height:34px;border:1px solid #e4e4e4;border-radius:17px;background:#fff"></div>
<div class="t" style="left:1242.42px;top:924px;font-size:12px;color:#777;letter-spacing:0.159px;">No entregado</div>
<div class="abs" style="left:1379px;top:913px;width:81px;height:34px;border:1px solid #efefef;border-radius:17px;background:#fff"></div>
<svg style="left:1396px;top:922px" width="13" height="12" viewBox="0 0 13 12"><path d="M9.5,6.2 V10.6 Q9.5,11.3 8.8,11.3 H1.2 Q0.5,11.3 0.5,10.6 V3 Q0.5,2.3 1.2,2.3 H6.2" fill="none" stroke="#c4c4c4" stroke-width="1.2"/><path d="M4.4,8 L4.9,6.1 L10.6,0.5 L12.3,2.2 L6.6,7.8Z" fill="#b3b3b3"/></svg>
<div class="t" style="left:1411.33px;top:923px;font-size:13px;color:#b0b0b0;letter-spacing:-0.242px;">Editar</div>
<div class="abs" style="left:1464px;top:913px;width:92px;height:34px;border:1px solid #efefef;border-radius:17px;background:#fff"></div>
<svg style="left:1481px;top:924px" width="11" height="11" viewBox="0 0 11 11"><circle cx="5.3" cy="5.3" r="4.4" fill="none" stroke="#aaa" stroke-width="1.6"/><path d="M2.4,8.2 L8.2,2.4" stroke="#aaa" stroke-width="1.6"/></svg>
<div class="t" style="left:1494.93px;top:923px;font-size:13px;color:#b0b0b0;letter-spacing:-0.455px;">Eliminar</div>
<div class="abs" style="left:21.2px;top:310.4px;width:106.8px;height:43.80000000000001px;border:2.3px solid #ff0000;border-radius:6.5px;box-shadow:0 1px 5px rgba(0,0,0,0.28), inset 0 0 6px rgba(0,0,0,0.22)"></div>
<div class="abs" style="left:27.2px;top:369.3px;width:72.6px;height:48.19999999999999px;border:2.3px solid #ff0000;border-radius:6.5px;box-shadow:0 1px 5px rgba(0,0,0,0.28), inset 0 0 6px rgba(0,0,0,0.22)"></div>
<div class="abs" style="left:39.5px;top:473.5px;width:80.2px;height:48.200000000000045px;border:2.3px solid #ff0000;border-radius:6.5px;box-shadow:0 1px 5px rgba(0,0,0,0.28), inset 0 0 6px rgba(0,0,0,0.22)"></div>
<div class="abs" style="left:1478.4px;top:211.3px;width:118.29999999999995px;height:53.89999999999998px;border:2.3px solid #ff0000;border-radius:6.5px;box-shadow:0 1px 5px rgba(0,0,0,0.28), inset 0 0 6px rgba(0,0,0,0.22)"></div>
<svg style="left:0;top:0;filter:drop-shadow(1px 2px 2px rgba(0,0,0,0.45))" width="1648" height="959" viewBox="0 0 1648 959"><path d="M132.6,311.1 L155.3,301.2 L157.6,316.4Z" fill="#ff0000"/><path d="M156.45,308.79999999999995 L210,302" stroke="#ff0000" stroke-width="4"/></svg>
<svg style="left:0;top:0;filter:drop-shadow(1px 2px 2px rgba(0,0,0,0.45))" width="1648" height="959" viewBox="0 0 1648 959"><path d="M103.7,383 L126.5,373.5 L128.5,388.8Z" fill="#ff0000"/><path d="M127.5,381.15 L209.8,370.5" stroke="#ff0000" stroke-width="4"/></svg>
<svg style="left:0;top:0;filter:drop-shadow(1px 2px 2px rgba(0,0,0,0.45))" width="1648" height="959" viewBox="0 0 1648 959"><path d="M127.5,484 L148.8,474.7 L150.8,489.4Z" fill="#ff0000"/><path d="M149.8,482.04999999999995 L209.6,474.7" stroke="#ff0000" stroke-width="4"/></svg>
<svg style="left:0;top:0;filter:drop-shadow(1px 2px 2px rgba(0,0,0,0.45))" width="1648" height="959" viewBox="0 0 1648 959"><path d="M1539.6,271 L1531.4,294.5 L1547.3,294.5Z" fill="#ff0000"/><path d="M1539.35,294.5 L1539.4,328.5" stroke="#ff0000" stroke-width="4.6"/></svg>
<div class="abs" style="left:0;top:0;filter:drop-shadow(1px 2px 2px rgba(0,0,0,0.45))"><div class="t" style="left:215.22px;top:285px;font-size:32px;color:#ff0000;font-weight:bold;-webkit-text-stroke:0.5px #ff0000;">1</div></div>
<svg style="left:0;top:0;filter:drop-shadow(1px 2px 2px rgba(0,0,0,0.45))" width="1648" height="959" viewBox="0 0 1648 959"><ellipse cx="239.8" cy="296.20000000000005" rx="4.2" ry="4.2999999999999945" fill="none" stroke="#ff0000" stroke-width="3"/></svg>
<div class="abs" style="left:0;top:0;filter:drop-shadow(1px 2px 2px rgba(0,0,0,0.45))"><div class="t" style="left:214.91px;top:353px;font-size:32px;color:#ff0000;font-weight:bold;-webkit-text-stroke:0.5px #ff0000;">2</div></div>
<svg style="left:0;top:0;filter:drop-shadow(1px 2px 2px rgba(0,0,0,0.45))" width="1648" height="959" viewBox="0 0 1648 959"><ellipse cx="239.6" cy="363.04999999999995" rx="4.2999999999999945" ry="4.850000000000006" fill="none" stroke="#ff0000" stroke-width="3"/></svg>
<div class="abs" style="left:0;top:0;filter:drop-shadow(1px 2px 2px rgba(0,0,0,0.45))"><div class="t" style="left:216.30px;top:458px;font-size:32px;color:#ff0000;font-weight:bold;-webkit-text-stroke:0.5px #ff0000;">3</div></div>
<svg style="left:0;top:0;filter:drop-shadow(1px 2px 2px rgba(0,0,0,0.45))" width="1648" height="959" viewBox="0 0 1648 959"><ellipse cx="239.0" cy="469.25" rx="4.7" ry="3.95" fill="none" stroke="#ff0000" stroke-width="3"/></svg>
<div class="abs" style="left:0;top:0;filter:drop-shadow(1px 2px 2px rgba(0,0,0,0.45))"><div class="t" style="left:1527.15px;top:330.5px;font-size:32px;color:#ff0000;font-weight:bold;-webkit-text-stroke:0.5px #ff0000;">4</div></div>
<svg style="left:0;top:0;filter:drop-shadow(1px 2px 2px rgba(0,0,0,0.45))" width="1648" height="959" viewBox="0 0 1648 959"><ellipse cx="1551.7" cy="341.2" rx="4.2" ry="4.5000000000000115" fill="none" stroke="#ff0000" stroke-width="3"/></svg>
</body></html>
